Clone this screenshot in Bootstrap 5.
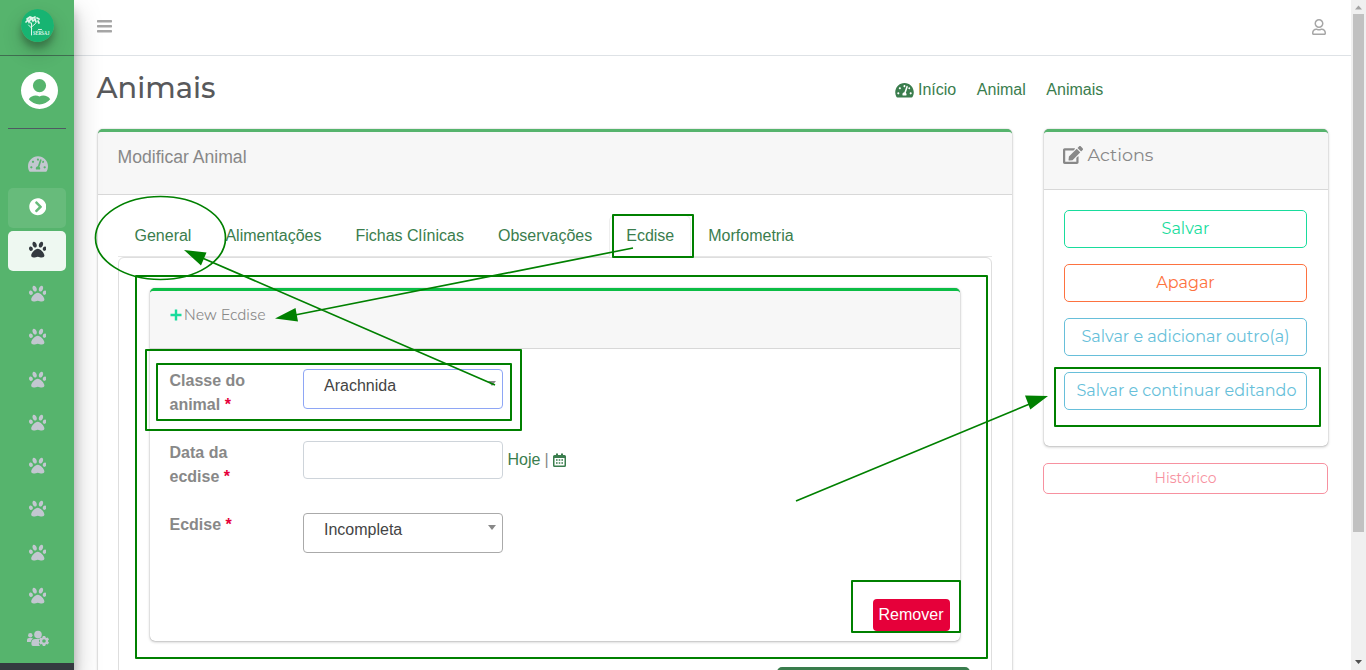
<!DOCTYPE html>
<html lang="pt-br">
<head>
<meta charset="utf-8">
<meta name="viewport" content="width=device-width, initial-scale=1">
<title>Animais</title>
<link href="https://cdn.jsdelivr.net/npm/bootstrap@5.3.0/dist/css/bootstrap.min.css" rel="stylesheet">
<style>
body{font-family:"Liberation Sans",sans-serif;font-size:16px;color:#888;background:#fff;height:100vh;overflow:hidden}
svg{display:block;fill:currentColor;flex:none}
a{text-decoration:none;color:#3a7d4d}
.mont{font-family:Montserrat,Inter,sans-serif;font-weight:400}
.side{width:74px;background:#343a40;box-shadow:0 14px 28px rgba(0,0,0,.25),0 10px 10px rgba(0,0,0,.22);z-index:5}
.side-in{height:663px;background:#56b46d}
.brand{height:56px;border-bottom:1px solid #3f6e50;padding:9px 0 0 21px}
.logo{border-radius:50%;box-shadow:0 10px 20px rgba(0,0,0,.19),0 6px 6px rgba(0,0,0,.23)}
.who{height:73px;margin:0 8px;padding:16px 0 0 13px;border-bottom:1px solid #4f5962;color:#fff}
.menu{margin:15.500px 8px 0;gap:3.2px}
.menu a{height:40px;border-radius:5px;color:#c2c7d0;padding:0 0 1.500px 1.200px}
.menu a.open{background:rgba(255,255,255,.1);color:#fff}
.menu a.current{background:rgba(255,255,255,.9);color:#343a40}
.topbar{height:56px;border-bottom:1px solid #dee2e6;padding:0 25px 3px 23px;color:#a6a6a6}
.title-row{height:73px;padding:0 0 0 22.500px}
.title-row h1{font:500 28.8px/36px Montserrat,Inter,sans-serif;color:#58595b;width:798.500px;margin:14px 0 0}
.crumbs{margin-top:22px;gap:20.6px}
.panel{border-top:3px solid #56b46d;border-radius:5px;box-shadow:0 0 1px rgba(0,0,0,.35),0 1px 3px rgba(0,0,0,.25);background:#fff}
.panel-head{background:#f7f7f7;border-bottom:1px solid #d8d8d8;border-radius:4px 4px 0 0;padding:0 20px}
.cols{padding-left:23.500px;gap:31.500px}
.main-panel{width:914.500px;height:600px}
.main-panel>.panel-head{height:63px;font-size:17.6px;padding-top:12px}
.nav-tabs{margin:20px 20.500px 0 20px;--bs-nav-tabs-border-color:#e6e6e6}
.nav-tabs .nav-link,.nav-tabs .nav-link.active{color:#3a7d4d}
.nav-tabs .nav-link.active{border-color:#eee #eee #fff}
.tab-box{margin:0 20.500px 0 20px;border:1px solid #dedede;border-radius:6px;height:480px;padding:30px 30.500px 0 31px}
.inner{border-top-color:#0bbd45;height:353px;margin-bottom:26px}
.inner .panel-head{height:58px;padding-top:12px;font:300 15.8px/24px Nunito,"Open Sans",sans-serif;gap:2.500px}
.fields{padding:20px 20px 0}
.field{height:72px}
.field b{width:133.500px;line-height:24px;padding-right:24px}
.field b i{color:#e6003a;font-style:normal}
.box{width:200px;border:1px solid #aaa;border-radius:4px;color:#444}
.picker{height:40px;padding:4px 6px 0 20px}
.picker::after{content:"";float:right;border:4.5px solid transparent;border-top:5px solid #888;border-bottom:0;margin-top:7px}
.remove{width:77px;height:32px;background:#e6003a;color:#fff;border-radius:4px;margin-top:14px;margin-right:-9.500px;padding:0}
.add{width:193px;height:40px;background:#3a7d4d;border-radius:5px;margin-right:-10px}
.act-panel{width:284px;height:317px}
.act-panel .panel-head{height:58px;font-size:17.6px;padding:10px 19.500px 0;gap:4.500px}
.acts{padding:20px 20.500px;gap:16px}
.acts .btn,.hist{border-radius:5px;background:#fff;padding:0;font-size:16px}
.acts .btn{height:38px;border:1px solid currentColor;white-space:nowrap;line-height:33px;padding-bottom:2px}
.acts .btn:last-child{padding-left:2px}
.hist{border:1px solid #f791a0;color:#f791a0;height:31px;width:285px;margin:17px 0 0 -.5px;font-size:14px;line-height:26px;padding-bottom:2px}
.c-g{color:#18dc9c}.c-o{color:#fd7240}.c-b{color:#67bfda}
.scroll{width:15px;background:#f0f0f0;z-index:6}
.scroll i{width:11px;height:518px;background:#c1c1c1;margin-left:2px}
.marks{left:0;top:0;z-index:9;pointer-events:none}
</style>
</head>
<body class="d-flex position-relative">
<svg width="0" height="0" class="position-absolute"><defs>
<symbol id="paw" viewBox="0 0 512 512"><path d="M256 224c-79.41 0-192 122.76-192 200.25 0 34.9 26.81 55.75 71.74 55.75 48.84 0 81.09-25.08 120.26-25.08 39.51 0 71.85 25.08 120.26 25.08 44.93 0 71.74-20.85 71.74-55.75C448 346.76 335.41 224 256 224zm-147.28-12.61c-10.4-34.65-42.44-57.09-71.56-50.13-29.12 6.96-44.29 40.69-33.89 75.34 10.4 34.65 42.44 57.09 71.56 50.13 29.12-6.96 44.29-40.69 33.89-75.34zm84.72-20.78c30.94-8.14 42.93-52.08 26.78-98.15-16.15-46.07-54.33-76.81-85.27-68.66-30.94 8.14-42.93 52.08-26.78 98.15 16.15 46.07 54.33 76.81 85.27 68.66zm281.39-29.34c-29.12-6.96-61.15 15.48-71.56 50.13-10.4 34.65 4.77 68.38 33.89 75.34 29.12 6.96 61.15-15.48 71.56-50.13 10.4-34.65-4.77-68.38-33.89-75.34zm-156.27 29.34c30.94 8.14 69.11-22.59 85.27-68.66 16.15-46.07 4.16-90.01-26.78-98.15-30.94-8.14-69.11 22.59-85.27 68.66-16.15 46.07-4.16 90.01 26.78 98.15z"/></symbol>
<symbol id="dash" viewBox="0 0 576 512"><path d="M288 32C128.94 32 0 160.94 0 320c0 52.8 14.25 102.26 39.06 144.8 5.61 9.62 16.3 15.2 27.44 15.2h443c11.14 0 21.83-5.58 27.44-15.2C561.75 422.26 576 372.8 576 320c0-159.06-128.94-288-288-288zm0 64c14.71 0 26.58 10.13 30.32 23.65-1.11 2.26-2.64 4.23-3.45 6.67l-9.22 27.67c-5.13 3.49-10.97 6.01-17.64 6.01-17.67 0-32-14.33-32-32S270.33 96 288 96zM96 384c-17.67 0-32-14.33-32-32s14.33-32 32-32 32 14.33 32 32-14.33 32-32 32zm48-160c-17.67 0-32-14.33-32-32s14.33-32 32-32 32 14.33 32 32-14.33 32-32 32zm246.77-72.41l-61.33 184C343.13 347.33 352 364.54 352 384c0 11.72-3.38 22.55-8.88 32H232.88c-5.5-9.45-8.88-20.28-8.88-32 0-33.94 26.5-61.43 59.9-63.59l61.34-184.01c4.17-12.56 17.73-19.45 30.36-15.17 12.57 4.19 19.35 17.79 15.17 30.36zm14.66 57.2l15.52-46.55c3.47-1.29 7.13-2.23 11.05-2.23 17.67 0 32 14.33 32 32s-14.33 32-32 32c-11.38-.01-20.89-6.28-26.57-15.22zM480 384c-17.67 0-32-14.33-32-32s14.33-32 32-32 32 14.33 32 32-14.33 32-32 32z"/></symbol>
</defs></svg>

<aside class="side flex-shrink-0 position-relative">
  <div class="side-in">
    <div class="brand">
      <svg class="logo" width="33" height="33" viewBox="0 0 33 33"><circle cx="16.5" cy="16.5" r="16.5" fill="#17b472"/><g fill="none" stroke="#dff5ea" stroke-width="1" stroke-linecap="round"><path d="M10.5 26V14M10.5 19l-3-3M10.5 18l4-3.500M10.500 15L8 12" /><path d="M5 13l2-2 1 2 2-4 2 3 2-2 1 3M6 10l3-2 3 1 2-1M16 9l2 1M17 12l1 2" stroke-width="1.700"/><path d="M17 21q1-2 2 0q1-2 2 0" /></g><text x="12" y="26.300" font-family="Liberation Serif" font-weight="bold" font-size="5.800" textLength="16.500" lengthAdjust="spacingAndGlyphs" fill="#dff5ea">SERSAJ</text></svg>
    </div>
    <div class="who"><svg width="37" height="37" viewBox="0 0 37 37"><path fill-rule="evenodd" d="M18.500 0a18.500 18.500 0 1 0 0 37a18.500 18.500 0 0 0 0-37M18.500 7a6.600 6.600 0 1 1 0 13.200a6.600 6.600 0 0 1 0-13.200M7.800 27.300C10 23.500 15 22.800 18.500 24.400C22 22.800 27 23.500 29.200 27.300A13.700 13.700 0 0 1 7.800 27.300"/></svg></div>
    <nav class="menu d-flex flex-column">
      <a href="#" class="d-flex align-items-center justify-content-center"><svg width="20" height="18"><use href="#dash"/></svg></a>
      <a href="#" class="open d-flex align-items-center justify-content-center"><svg width="17.600" height="17.600" viewBox="0 0 512 512"><path d="M256 8c137 0 248 111 248 248S393 504 256 504 8 393 8 256 119 8 256 8zm113.900 231L234.400 103.500c-9.400-9.400-24.600-9.400-33.900 0l-17 17c-9.400 9.400-9.400 24.600 0 33.900L285.100 256 183.500 357.600c-9.400 9.400-9.400 24.600 0 33.900l17 17c9.400 9.400 24.600 9.400 33.900 0L369.900 273c9.400-9.400 9.400-24.600 0-34z"/></svg></a>
      <a href="#" class="current d-flex align-items-center justify-content-center"><svg width="17.600" height="17.600"><use href="#paw"/></svg></a>
      <a href="#" class="d-flex align-items-center justify-content-center"><svg width="17.600" height="17.600"><use href="#paw"/></svg></a>
      <a href="#" class="d-flex align-items-center justify-content-center"><svg width="17.600" height="17.600"><use href="#paw"/></svg></a>
      <a href="#" class="d-flex align-items-center justify-content-center"><svg width="17.600" height="17.600"><use href="#paw"/></svg></a>
      <a href="#" class="d-flex align-items-center justify-content-center"><svg width="17.600" height="17.600"><use href="#paw"/></svg></a>
      <a href="#" class="d-flex align-items-center justify-content-center"><svg width="17.600" height="17.600"><use href="#paw"/></svg></a>
      <a href="#" class="d-flex align-items-center justify-content-center"><svg width="17.600" height="17.600"><use href="#paw"/></svg></a>
      <a href="#" class="d-flex align-items-center justify-content-center"><svg width="17.600" height="17.600"><use href="#paw"/></svg></a>
      <a href="#" class="d-flex align-items-center justify-content-center"><svg width="17.600" height="17.600"><use href="#paw"/></svg></a>
      <a href="#" class="d-flex align-items-center justify-content-center"><svg width="22" height="17" viewBox="0 0 22 17"><circle cx="3.300" cy="5.200" r="2.200"/><path d="M0 12v-2q0-2 2-2h2.500q1 0 1.500.500Q4 9.800 3.700 12z"/><circle cx="11" cy="4.600" r="3.800"/><path d="M4.400 14v-1Q4.400 9 8.500 9h4q-.9 1-.3 2.200-1 2.400.8 4.800H6q-1.600 0-1.600-2"/><path fill-rule="evenodd" d="M15.800 6h2.400l.3 1.300 1 .6 1.300-.4 1.200 2-1 1v1l1 1-1.200 2-1.300-.4-1 .6-.3 1.300h-2.400l-.3-1.300-1-.6-1.300.4-1.200-2 1-1v-1l-1-1 1.200-2 1.300.4 1-.6zM17 9.200a1.800 1.800 0 1 0 0 3.600a1.800 1.800 0 0 0 0-3.600"/></svg></a>
    </nav>
  </div>
</aside>

<div class="flex-grow-1">
  <header class="topbar d-flex align-items-center justify-content-between">
    <svg width="15" height="13" viewBox="0 0 15 13"><rect y="0" width="15" height="2.400" rx=".6"/><rect y="5" width="15" height="2.400" rx=".6"/><rect y="10" width="15" height="2.400" rx=".6"/></svg>
    <svg style="margin-top:1px" width="14" height="16" viewBox="0 0 448 512"><path d="M313.600 304c-28.700 0-42.500 16-89.600 16-47.100 0-60.800-16-89.600-16C60.200 304 0 364.200 0 438.400V464c0 26.500 21.500 48 48 48h352c26.500 0 48-21.500 48-48v-25.600c0-74.200-60.200-134.400-134.400-134.400zM400 464H48v-25.600c0-47.600 38.800-86.400 86.400-86.400 14.600 0 38.300 16 89.600 16 51.700 0 74.900-16 89.600-16 47.600 0 86.400 38.800 86.400 86.400V464zM224 288c79.500 0 144-64.500 144-144S303.500 0 224 0 80 64.500 80 144s64.500 144 144 144zm0-240c52.900 0 96 43.100 96 96s-43.100 96-96 96-96-43.100-96-96 43.100-96 96-96z"/></svg>
  </header>
  <div class="title-row d-flex align-items-start">
    <h1>Animais</h1>
    <nav class="crumbs d-flex">
      <a href="#" class="d-flex align-items-center"><svg class="me-1" width="19" height="16.500"><use href="#dash"/></svg>Início</a><a href="#">Animal</a><a href="#">Animais</a>
    </nav>
  </div>
  <main class="cols d-flex align-items-start">
    <section class="panel main-panel">
      <div class="panel-head">Modificar Animal</div>
      <ul class="nav nav-tabs">
        <li class="nav-item"><a class="nav-link" href="#">General</a></li>
        <li class="nav-item"><a class="nav-link" href="#">Alimentações</a></li>
        <li class="nav-item"><a class="nav-link" href="#">Fichas Clínicas</a></li>
        <li class="nav-item"><a class="nav-link" href="#">Observações</a></li>
        <li class="nav-item"><a class="nav-link active" href="#">Ecdise</a></li>
        <li class="nav-item"><a class="nav-link" href="#">Morfometria</a></li>
      </ul>
      <div class="tab-box">
        <div class="panel inner">
          <div class="panel-head d-flex align-items-start"><svg class="c-g" style="margin-top:6px" width="12" height="12" viewBox="0 0 12 12"><path d="M4.800.5h2.400v4.300h4.300v2.400H7.200v4.300H4.800V7.200H.5V4.800h4.300z"/></svg><span>New Ecdise</span></div>
          <div class="fields">
            <div class="field d-flex align-items-start"><b>Classe do animal <i>*</i></b><div class="box picker" style="border-color:#8ea6f5">Arachnida</div></div>
            <div class="field d-flex align-items-start"><b>Data da ecdise <i>*</i></b><div class="box" style="height:38px;border-color:#ced4da"></div><span class="d-flex align-items-center" style="height:38px;margin-left:4.500px"><a href="#">Hoje</a><span class="mx-1">|</span><a href="#"><svg width="13" height="15" viewBox="0 0 13 15"><path fill-rule="evenodd" d="M1.500 2H3V.5h2V2h3V.5h2V2h1.500Q13 2 13 3.500v9q0 1.500-1.500 1.500h-10Q0 14 0 12.500v-9Q0 2 1.500 2M1.500 5v7.500h10V5zM3 6.200h1.600v1.600H3zm2.700 0h1.600v1.600H5.700zm2.700 0H10v1.600H8.400zM3 9.200h1.600v1.600H3zm2.700 0h1.600v1.600H5.700zm2.700 0H10v1.600H8.400z"/></svg></a></span></div>
            <div class="field d-flex align-items-start"><b>Ecdise <i>*</i></b><div class="box picker">Incompleta</div></div>
            <div class="d-flex justify-content-end"><button class="btn remove">Remover</button></div>
          </div>
        </div>
        <div class="d-flex justify-content-end"><div class="add"></div></div>
      </div>
    </section>
    <aside class="d-flex flex-column">
      <section class="panel act-panel">
        <div class="panel-head mont d-flex align-items-start"><svg style="margin-top:4px" width="20" height="18" viewBox="0 0 576 512"><path d="M402.600 83.200l90.200 90.200c3.800 3.800 3.800 10 0 13.800L274.400 405.600l-92.800 10.300c-12.400 1.400-22.900-9.100-21.500-21.500l10.300-92.800L388.800 83.200c3.800-3.800 10-3.800 13.800 0zm162-22.900l-48.800-48.800c-15.200-15.200-39.900-15.200-55.200 0l-35.400 35.400c-3.800 3.800-3.800 10 0 13.800l90.200 90.200c3.800 3.800 10 3.800 13.800 0l35.400-35.400c15.200-15.300 15.200-40 0-55.200zM384 346.200V448H64V128h229.800c3.200 0 6.200-1.300 8.500-3.500l40-40c7.600-7.600 2.200-20.500-8.500-20.500H48C21.500 64 0 85.500 0 112v352c0 26.500 21.500 48 48 48h352c26.500 0 48-21.500 48-48V306.200c0-10.700-12.900-16-20.500-8.500l-40 40c-2.200 2.300-3.500 5.300-3.500 8.500z"/></svg><span>Actions</span></div>
        <div class="acts d-flex flex-column">
          <button class="btn mont c-g">Salvar</button>
          <button class="btn mont c-o">Apagar</button>
          <button class="btn mont c-b">Salvar e adicionar outro(a)</button>
          <button class="btn mont c-b">Salvar e continuar editando</button>
        </div>
      </section>
      <button class="btn mont hist">Histórico</button>
    </aside>
  </main>
</div>
<div class="scroll flex-shrink-0 d-flex flex-column">
  <svg width="15" height="14"><path d="M4 9.500h7L7.500 5.500z" fill="#a3a3a3"/></svg><i></i>
  <svg class="mt-auto" width="15" height="14"><path d="M4 4h7L7.500 8z" fill="#505050"/></svg>
</div>

<svg class="marks position-absolute" width="1366" height="670" viewBox="0 0 1366 670">
  <g fill="none" stroke="#008000" stroke-width="2" stroke-linejoin="round">
    <ellipse cx="160.500" cy="238" rx="65" ry="41.500" stroke-width="1.700"/>
    <path d="M613 215h80v42h-80zM136 276h851v382H136zM146 350h375v80H146zM157 364h354v56H157zM852 581h108v51H852zM1055 368h265v58h-265z"/>
    <path d="M495 385L200 257M633 248L290 316M796 501L1032 403" stroke-width="1.700"/>
  </g>
  <path fill="#008000" d="M184 250l22.500 2.500-5.500 13zM275 318.500l20.500-10.500 2.500 13.500zM1048 396l-23-.5 5.300 14z"/>
</svg>
</body>
</html>
